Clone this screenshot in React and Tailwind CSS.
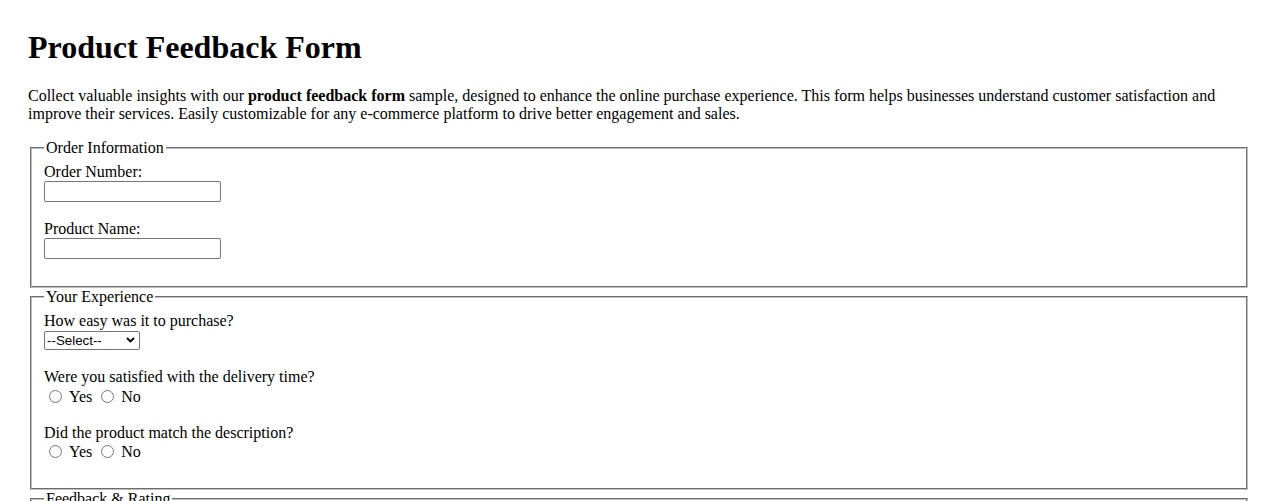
import React from 'react';

// Native-looking text box (Chrome form control look)
const TextBox = ({ name }) => (
  <input
    type="text"
    name={name}
    className="block w-[177px] h-[21px] border border-[#767676] rounded-[2px] bg-white px-[3px] py-[2px] font-['Liberation_Sans',Arial,sans-serif] text-[13.33px] outline-none"
  />
);

const Radio = ({ name, label }) => (
  <label className="inline-flex items-baseline">
    <input type="radio" name={name} className="ml-[5px] mr-[3px] mt-[3px] w-[13px] h-[13px] translate-y-[1px]" />
    <span className="ml-[4px] mr-[4px]">{label}</span>
  </label>
);

const YesNo = ({ name }) => (
  <div className="h-[19.5px] flex items-center">
    <Radio name={name} label="Yes" />
    <Radio name={name} label="No" />
  </div>
);

const Section = ({ title, children }) => (
  <fieldset className="mx-[2px] border-2 [border-style:groove] border-[#c0c0c0] px-[12px] pt-[5.6px] pb-[8.5px]">
    <legend className="px-[2px]">{title}</legend>
    {children}
  </fieldset>
);

const Gap = () => <div className="h-[18.4px]" />;

export default function App() {
  return (
    <div className="h-screen overflow-hidden bg-white text-black font-['Liberation_Serif','Times_New_Roman',serif] text-[16px] leading-[normal]">
      <div className="px-[28px] pt-[29px]">
        <h1 className="text-[32px] font-bold leading-[normal] mb-[21.44px]">Product Feedback Form</h1>
        <p className="mb-[16px]">
          Collect valuable insights with our <b>product feedback form</b> sample, designed to enhance the online purchase
          experience. This form helps businesses understand customer satisfaction and improve their services. Easily
          customizable for any e-commerce platform to drive better engagement and sales.
        </p>

        <form>
          <Section title="Order Information">
            <label className="block">Order Number:</label>
            <TextBox name="order" />
            <Gap />
            <label className="block">Product Name:</label>
            <TextBox name="product" />
            <Gap />
          </Section>

          <Section title="Your Experience">
            <label className="block">How easy was it to purchase?</label>
            <div className="h-[19.5px] pt-[1px]">
              <div className="flex items-center justify-between w-[96px] h-[19px] border border-[#767676] rounded-[2px] bg-white pl-[2px] pr-[4px] font-['Liberation_Sans',Arial,sans-serif] text-[13.33px] leading-none">
                <span>--Select--</span>
                <svg width="9" height="6" viewBox="0 0 9 6" fill="none">
                  <path d="M1 1l3.5 3.5L8 1" stroke="#000" strokeWidth="1.9" />
                </svg>
              </div>
            </div>
            <Gap />
            <label className="block">Were you satisfied with the delivery time?</label>
            <YesNo name="delivery" />
            <Gap />
            <label className="block">Did the product match the description?</label>
            <YesNo name="match" />
            <Gap />
          </Section>

          <Section title="Feedback &amp; Rating">
            <label className="block">How would you rate the product?</label>
            <div className="h-[19.5px]" />
            <Gap />
            <label className="block">Additional comments:</label>
            <textarea className="block w-[300px] h-[80px] border border-[#767676]" />
          </Section>
        </form>
      </div>
    </div>
  );
}
